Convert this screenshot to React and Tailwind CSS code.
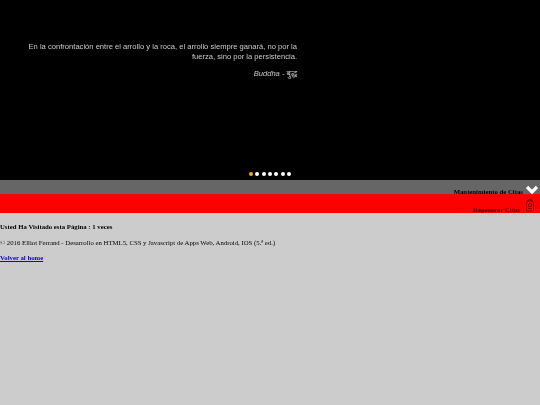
import React from 'react';

function App() {
    return (
        <div className="min-h-[405px] bg-[#cccccc] font-['Liberation_Serif',serif] text-black overflow-hidden">
            <div className="h-[180px] bg-black flex flex-col">
                <div className="w-[269px] pt-[42px] ml-[28px] text-right font-['Liberation_Sans','Noto_Sans',sans-serif] text-[7.6px] leading-[9.5px] text-[#cccccc] blur-[0.3px]">
                    <p>En la confrontación entre el arrollo y la roca, el arrollo siempre ganará, no por la fuerza, sino por la persistencia.</p>
                    <p className="mt-[8px] italic">Buddha - बुद्ध</p>
                </div>
                <div className="mt-auto pb-[4px] flex justify-center gap-[2.2px]">
                    <span className="w-[4.2px] h-[4.2px] rounded-full bg-[#f5a623]"></span>
                    {[1, 2, 3, 4, 5, 6].map((i) => (
                        <span key={i} className="w-[4.2px] h-[4.2px] rounded-full bg-white"></span>
                    ))}
                </div>
            </div>
            <div className="h-[14px] bg-[#666666] flex justify-end items-start">
                <span className="mt-[7px] mr-[2px] text-[6.75px] leading-[9px] font-bold blur-[0.3px]">Mantenimiento de Citas</span>
                <svg width="14" height="10" viewBox="0 0 14 10" className="mt-[5px] mr-[1px]">
                    <path d="M2 2 L7 7 L12 2" fill="none" stroke="#fff" strokeWidth="3.2" />
                </svg>
            </div>
            <div className="h-[19px] bg-[#ff0000] flex justify-end items-start">
                <span className="mt-[11px] mr-[5px] text-[6.75px] leading-[9px] font-bold text-[#400000] blur-[0.3px]">Regenerar Citas</span>
                <svg width="10" height="14" viewBox="0 0 10 14" className="mt-[4px] mr-[5px]">
                    <path d="M3.5 1.5 H6.5 V3 M3.5 1.5 V3 M2.5 3 H7.5 Q8.5 3 8.5 4 V12 Q8.5 13 7.5 13 H2.5 Q1.5 13 1.5 12 V4 Q1.5 3 2.5 3 Z" fill="none" stroke="#660000" strokeWidth="0.8" />
                    <circle cx="5" cy="7" r="1.6" fill="none" stroke="#660000" strokeWidth="0.8" />
                    <path d="M3 10.5 H7" fill="none" stroke="#660000" strokeWidth="0.8" />
                </svg>
            </div>
            <div className="text-[6.75px] leading-[9px] blur-[0.3px]">
                <p className="mt-[9px] font-bold">Usted Ha Visitado esta Página : 1 veces</p>
                <p className="mt-[7px]">© 2016 Elliot Ferrand - Desarrollo en HTML5, CSS y Javascript de Apps Web, Android, IOS (5.ª ed.)</p>
                <a href="#" className="block mt-[6px] font-bold text-[#0000ee] underline">Volver al home</a>
            </div>
        </div>
    );
}

export default App
